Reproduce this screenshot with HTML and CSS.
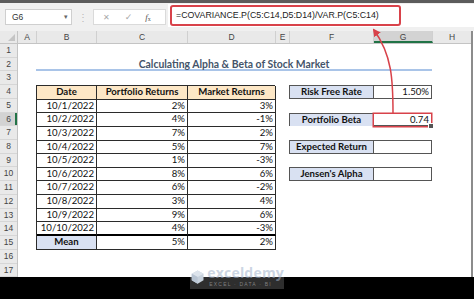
FILE: index.html
```html
<!DOCTYPE html>
<html lang="en">
<head>
    <meta charset="UTF-8">
    <title>Calculating Alpha &amp; Beta of Stock Market</title>
    <link rel="stylesheet" href="styles.css">
</head>
<body>
    <div class="window">
        <div class="topbar"></div>

        <div class="formula-row">
            <div class="namebox"><span>G6</span><span class="caret">&#9662;</span></div>
            <div class="sep">&#8942;</div>
            <div class="fx-box">
                <span class="fx-cancel">&#10005;</span>
                <span class="fx-enter">&#10003;</span>
                <span class="fx-label"><i>f</i><sub>x</sub></span>
            </div>
            <div class="formula">
                <div class="formula-text">=COVARIANCE.P(C5:C14,D5:D14)/VAR.P(C5:C14)</div>
            </div>
        </div>

        <div class="sheet">
            <div class="col-heads">
                <div class="corner"><span class="corner-mark"></span></div>
                <div class="col-head col-a">A</div>
                <div class="col-head col-b">B</div>
                <div class="col-head col-c">C</div>
                <div class="col-head col-d">D</div>
                <div class="col-head col-e">E</div>
                <div class="col-head col-f">F</div>
                <div class="col-head col-g active">G</div>
                <div class="col-head col-h">H</div>
            </div>

            <div class="sheet-body">
                <div class="row-heads">
                    <div class="row-head">1</div>
                    <div class="row-head">2</div>
                    <div class="row-head">3</div>
                    <div class="row-head">4</div>
                    <div class="row-head">5</div>
                    <div class="row-head active">6</div>
                    <div class="row-head">7</div>
                    <div class="row-head">8</div>
                    <div class="row-head">9</div>
                    <div class="row-head">10</div>
                    <div class="row-head">11</div>
                    <div class="row-head">12</div>
                    <div class="row-head">13</div>
                    <div class="row-head">14</div>
                    <div class="row-head">15</div>
                    <div class="row-head">16</div>
                    <div class="row-head">17</div>
                </div>

                <div class="cells">
                    <div class="title">Calculating Alpha &amp; Beta of Stock Market</div>

                    <div class="returns">
                        <div class="cell head">Date</div>
                        <div class="cell head">Portfolio Returns</div>
                        <div class="cell head">Market Returns</div>

                        <div class="cell num">10/1/2022</div><div class="cell num">2%</div><div class="cell num">3%</div>
                        <div class="cell num">10/2/2022</div><div class="cell num">4%</div><div class="cell num">-1%</div>
                        <div class="cell num">10/3/2022</div><div class="cell num">7%</div><div class="cell num">2%</div>
                        <div class="cell num">10/4/2022</div><div class="cell num">5%</div><div class="cell num">7%</div>
                        <div class="cell num">10/5/2022</div><div class="cell num">1%</div><div class="cell num">-3%</div>
                        <div class="cell num">10/6/2022</div><div class="cell num">8%</div><div class="cell num">6%</div>
                        <div class="cell num">10/7/2022</div><div class="cell num">6%</div><div class="cell num">-2%</div>
                        <div class="cell num">10/8/2022</div><div class="cell num">3%</div><div class="cell num">4%</div>
                        <div class="cell num">10/9/2022</div><div class="cell num">9%</div><div class="cell num">6%</div>
                        <div class="cell num last">10/10/2022</div><div class="cell num last">4%</div><div class="cell num last">-3%</div>

                        <div class="cell mean">Mean</div><div class="cell num">5%</div><div class="cell num">2%</div>
                    </div>

                    <div class="kv kv-risk">
                        <div class="kv-label">Risk Free Rate</div>
                        <div class="kv-value">1.50%</div>
                    </div>
                    <div class="kv kv-beta">
                        <div class="kv-label">Portfolio Beta</div>
                        <div class="kv-value selected">0.74</div>
                    </div>
                    <div class="kv kv-expected">
                        <div class="kv-label">Expected Return</div>
                        <div class="kv-value"></div>
                    </div>
                    <div class="kv kv-alpha">
                        <div class="kv-label">Jensen's Alpha</div>
                        <div class="kv-value"></div>
                    </div>
                </div>
            </div>
        </div>

        <div class="taskbar"></div>

        <!-- callout from the formula bar to G6 -->
        <svg class="arrow" width="474" height="299" viewBox="0 0 474 299">
            <defs>
                <marker id="head" markerWidth="8" markerHeight="8" refX="6" refY="4" orient="auto" markerUnits="userSpaceOnUse">
                    <path d="M0,0 L8,4 L0,8 Z" fill="#d8424a"/>
                </marker>
            </defs>
            <path d="M393 113 C393 80 392 55 374 30" fill="none" stroke="#d8424a" stroke-width="1.5" marker-end="url(#head)"/>
        </svg>

        <div class="watermark">
            <svg class="wm-logo" width="18" height="20" viewBox="0 0 18 20">
                <path d="M9 1 L17 5.5 L17 14.5 L9 19 L1 14.5 L1 5.5 Z" fill="#c7d1dc"/>
                <path d="M9 1 L17 5.5 L9 10 L1 5.5 Z" fill="#dde4ec"/>
                <path d="M9 10 L9 19 L1 14.5 L1 5.5 Z" fill="#b8c4d2"/>
            </svg>
            <div class="wm-text">
                <div class="wm-name">exceldemy</div>
                <div class="wm-sub">EXCEL · DATA · BI</div>
            </div>
        </div>
    </div>
</body>
</html>
```

FILE: styles.css
```css
* {
    margin: 0;
    padding: 0;
    box-sizing: border-box;
}

body {
    width: 474px;
    height: 299px;
    overflow: hidden;
    background: #000000;
    font-family: Lato, "Liberation Sans", sans-serif;
}

.window {
    position: relative;
    width: 474px;
    height: 299px;
    background: #ffffff;
    display: flex;
    flex-direction: column;
}

.topbar {
    height: 3px;
    background: #5c5c5c;
}

/* formula bar */
.formula-row {
    height: 28px;
    background: #f0f0f0;
    display: flex;
    align-items: center;
    padding-left: 5px;
}

.namebox {
    width: 67px;
    height: 16px;
    background: #ffffff;
    border: 1px solid #cfcfcf;
    display: flex;
    justify-content: space-between;
    align-items: center;
    padding: 0 3px 0 6px;
    font: 8.5px "Liberation Sans", sans-serif;
    color: #333333;
}

.caret {
    font-size: 7px;
    color: #666666;
}

.sep {
    width: 21px;
    text-align: center;
    color: #b8b8b8;
    font-size: 10px;
}

.fx-box {
    width: 73px;
    height: 16px;
    background: #ffffff;
    border: 1px solid #dadada;
    display: flex;
    align-items: center;
    font-family: "DejaVu Sans", sans-serif;
}

.fx-cancel {
    margin-left: 9px;
    font-size: 8px;
    color: #a8a8a8;
}

.fx-enter {
    margin-left: 15px;
    font-size: 9px;
    color: #a8a8a8;
}

.fx-label {
    margin-left: 13px;
    font: 9px "Liberation Serif", serif;
    color: #555555;
}

.fx-label sub {
    font-size: 6px;
    vertical-align: -1px;
}

.formula {
    flex: 1;
    align-self: stretch;
    margin: 1px 0 4px 2px;
    background: #ffffff;
    padding: 1px 0 0 2px;
}

.formula-text {
    width: 231px;
    height: 21px;
    border: 2px solid #d8424a;
    border-radius: 3px;
    padding-left: 4px;
    font: 8.8px "Liberation Sans", sans-serif;
    line-height: 17px;
    color: #222222;
    white-space: nowrap;
}

/* sheet grid */
.sheet {
    width: 473px;
    border-right: 2px solid #8c8c8c;
}

.col-heads {
    display: flex;
    height: 13px;
    background: #e9e9e9;
    border-bottom: 1px solid #c4c4c4;
}

.corner {
    width: 18px;
    border-right: 1px solid #c4c4c4;
    position: relative;
}

.corner-mark {
    position: absolute;
    right: 2px;
    bottom: 2px;
    border-left: 7px solid transparent;
    border-bottom: 7px solid #c4c4c4;
}

.col-head {
    border-right: 1px solid #d0d0d0;
    text-align: center;
    font: 8.5px "Liberation Sans", sans-serif;
    line-height: 12px;
    color: #444444;
}

.col-a { width: 19px; }
.col-b { width: 60px; }
.col-c { width: 91px; }
.col-d { width: 88px; }
.col-e { width: 14px; }
.col-f { width: 84px; }
.col-g { width: 59px; }
.col-h { flex: 1; border-right: none; }

.col-head.active {
    background: #d3d3d3;
    border-bottom: 2px solid #217346;
}

.sheet-body {
    display: flex;
}

.row-heads {
    width: 18px;
    background: #e9e9e9;
    border-right: 1px solid #c4c4c4;
}

.row-head {
    height: 13.72px;
    border-bottom: 1px solid #d6d6d6;
    text-align: center;
    font: 8.5px "Liberation Sans", sans-serif;
    line-height: 13px;
    color: #444444;
}

.row-head.active {
    background: #d3d3d3;
    box-shadow: inset -2px 0 0 #217346;
}

.cells {
    flex: 1;
    display: grid;
    grid-template-columns: 18px 60px 91px 88px 14px 84px 59px 1fr;
    grid-template-rows: repeat(17, 13.72px);
    font-size: 9.6px;
    color: #111111;
}

.title {
    grid-column: 2 / 8;
    grid-row: 2;
    text-align: center;
    font-weight: 700;
    font-size: 10.4px;
    color: #44546a;
    border-bottom: 2px solid #a9c4e8;
    line-height: 12px;
}

/* returns table */
.returns {
    grid-column: 2 / 5;
    grid-row: 4 / 16;
    display: grid;
    grid-template-columns: 60px 91px 88px;
    grid-template-rows: repeat(12, 1fr);
    border-left: 1px solid #2b2b2b;
    border-top: 1px solid #2b2b2b;
}

.cell {
    border-right: 1px solid #2b2b2b;
    border-bottom: 1px solid #2b2b2b;
    padding: 0 2px;
    line-height: 12px;
    white-space: nowrap;
}

.cell.head {
    background: #fde7c6;
    font-weight: 700;
    text-align: center;
}

.cell.num {
    text-align: right;
}

.cell.last {
    border-bottom: 2px solid #000000;
}

.cell.mean {
    background: #d9e1f2;
    font-weight: 700;
    text-align: center;
}

/* side results */
.kv {
    grid-column: 6 / 8;
    display: grid;
    grid-template-columns: 84px 1fr;
    border: 1px solid #555555;
}

.kv-risk { grid-row: 4; }
.kv-beta { grid-row: 6; }
.kv-expected { grid-row: 8; }
.kv-alpha { grid-row: 10; }

.kv-label {
    background: #d9e1f2;
    border-right: 1px solid #555555;
    font-weight: 700;
    text-align: center;
    line-height: 12px;
}

.kv-value {
    text-align: right;
    padding-right: 2px;
    line-height: 12px;
}

.kv-value.selected {
    position: relative;
    box-shadow: 0 0 0 1.5px #d8424a;
}

.kv-value.selected::after {
    content: "";
    position: absolute;
    right: -3px;
    bottom: -3px;
    width: 4px;
    height: 4px;
    background: #555555;
    border: 1px solid #ffffff;
}

.taskbar {
    flex: 1;
    background: #000000;
}

/* overlays */
.arrow {
    position: absolute;
    left: 0;
    top: 0;
    pointer-events: none;
}

.watermark {
    position: absolute;
    left: 190px;
    top: 264px;
    width: 94px;
    height: 25px;
    display: flex;
    align-items: center;
    gap: 3px;
    padding-left: 1px;
    background: rgba(255, 255, 255, 0.18);
}

.wm-text {
    display: flex;
    flex-direction: column;
    gap: 2px;
}

.wm-name {
    font: 700 14px "Open Sans", sans-serif;
    line-height: 13px;
    height: 13px;
    color: rgba(160, 178, 204, 0.55);
    letter-spacing: 0.2px;
}

.wm-sub {
    font: 5px "Liberation Sans", sans-serif;
    line-height: 6px;
    height: 6px;
    letter-spacing: 1.2px;
    color: rgba(150, 150, 150, 0.8);
    padding-left: 2px;
}
```
